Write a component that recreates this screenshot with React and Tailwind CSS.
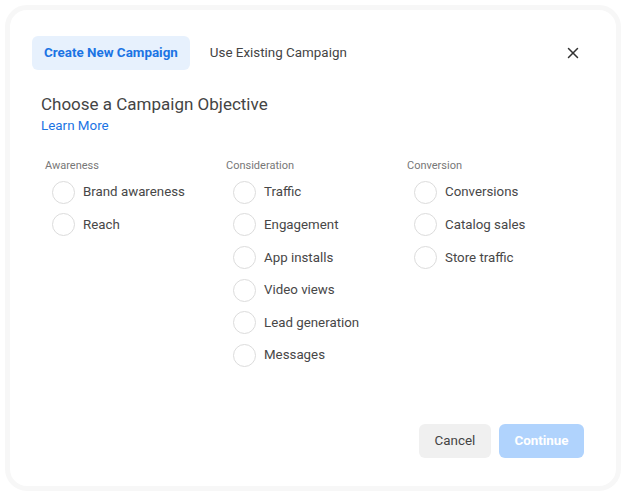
import { X } from 'lucide-react';

const COLUMNS = [
  { title: 'Awareness', items: ['Brand awareness', 'Reach'] },
  {
    title: 'Consideration',
    items: ['Traffic', 'Engagement', 'App installs', 'Video views', 'Lead generation', 'Messages'],
  },
  { title: 'Conversion', items: ['Conversions', 'Catalog sales', 'Store traffic'] },
];

function Radio({ label }) {
  return (
    <label className="flex h-[32.6px] items-center gap-2 pl-[7px]">
      <span className="h-[23px] w-[23px] shrink-0 rounded-full border border-[#dcdcdc] bg-white" />
      <span className="text-[13.3px] text-[#474747]">{label}</span>
    </label>
  );
}

export default function App() {
  return (
    <div className="h-[498px] w-[626px] bg-white p-[5px]" style={{ fontFamily: 'Roboto, "Liberation Sans", sans-serif' }}>
      <div className="flex h-[486px] flex-col rounded-[22px] border-[5px] border-[#f7f7f7] bg-white">
        <div className="flex items-center pl-[22px] pr-[34px] pt-[26px]">
          <button className="h-[34px] rounded-md bg-[#e7f1fd] px-3 text-[13.4px] font-bold text-[#1b74e4]">
            Create New Campaign
          </button>
          <button className="ml-5 text-[13.4px] text-[#444]">Use Existing Campaign</button>
          <button className="ml-auto text-[#333]">
            <X className="h-[18px] w-[18px]" strokeWidth={2} />
          </button>
        </div>

        <div className="px-[31px] pt-[24px]">
          <h2 className="text-[17px] leading-5 text-[#444]">Choose a Campaign Objective</h2>
          <a className="mt-[3px] block text-[13.4px] leading-[18px] text-[#1b74e4]">Learn More</a>
        </div>

        <div className="mt-[24px] grid grid-cols-[181px_181px_181px] pl-[35px]">
          {COLUMNS.map((col) => (
            <div key={col.title}>
              <p className="mb-[4px] text-[11px] leading-[13px] text-[#777]">{col.title}</p>
              {col.items.map((item) => (
                <Radio key={item} label={item} />
              ))}
            </div>
          ))}
        </div>

        <div className="mt-auto flex justify-end gap-2 pb-[28px] pr-[32px]">
          <button className="h-[34px] w-[72px] rounded-md bg-[#f0f0f0] text-[13.4px] text-[#444]">Cancel</button>
          <button className="h-[34px] w-[85px] rounded-md bg-[#b0d3fd] text-[13.4px] font-bold text-white">Continue</button>
        </div>
      </div>
    </div>
  );
}
